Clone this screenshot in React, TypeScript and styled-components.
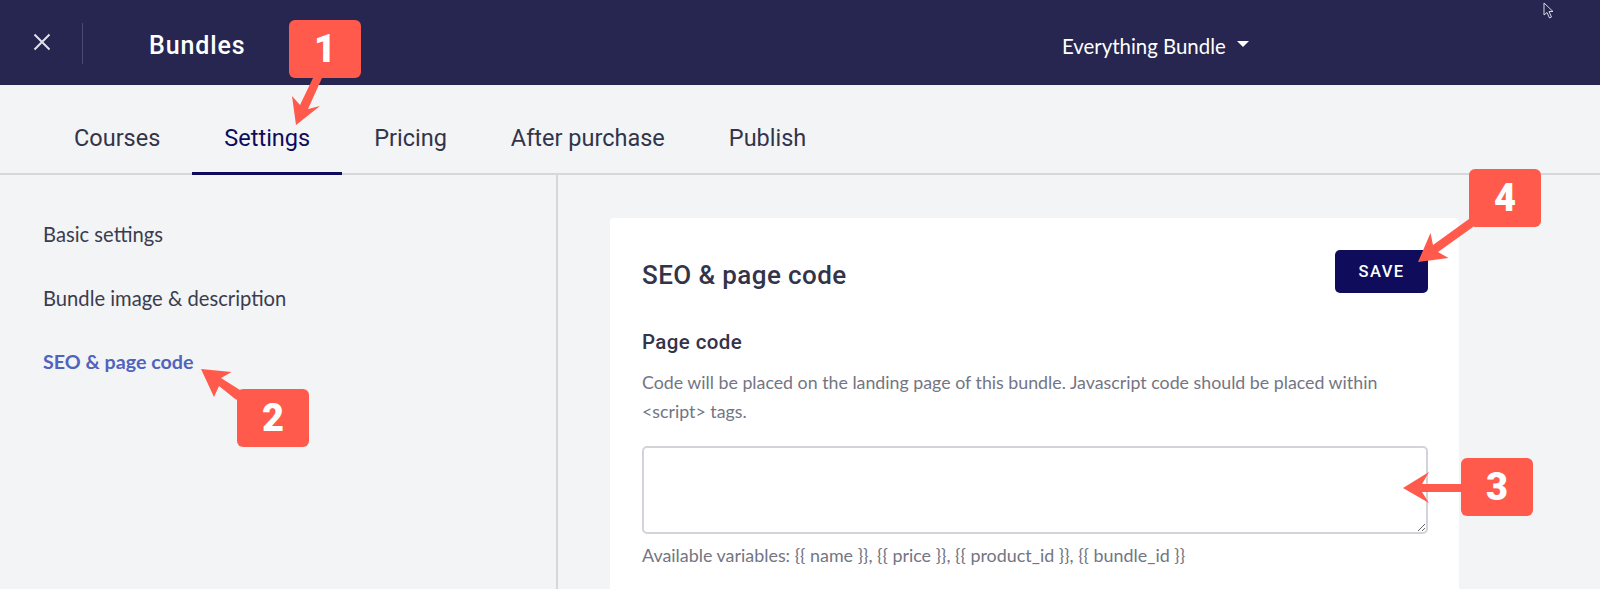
import React from "react";
import styled, { createGlobalStyle } from "styled-components";

const Global = createGlobalStyle`
  html, body { margin: 0; padding: 0; background: #f2f4f6; }
  * { box-sizing: border-box; }
`;

const Page = styled.div`
  position: relative;
  width: 1600px;
  height: 589px;
  overflow: hidden;
  background: #f2f4f6;
  font-family: "Lato", "Liberation Sans", sans-serif;
`;

const Header = styled.header`
  display: flex;
  align-items: center;
  height: 85px;
  background: #262650;
  color: #fff;
`;

const CloseButton = styled.div`
  display: flex;
  align-items: center;
  justify-content: center;
  width: 83px;
  height: 41px;
  margin-top: 2px;
  padding: 0 0 4px 2px;
  border-right: 1px solid #4a4b70;
`;

const HeaderTitle = styled.h1`
  margin: 6px 0 0 66px;
  font: 500 25px "Roboto", sans-serif;
  letter-spacing: 0.9px;
  width: 913px;
`;

const BundleSelect = styled.div`
  display: flex;
  align-items: center;
  gap: 11px;
  font-size: 20.4px;
  margin-top: 6px;
`;

const Caret = styled.span`
  width: 0;
  height: 0;
  margin-top: -4px;
  border-left: 6px solid transparent;
  border-right: 6px solid transparent;
  border-top: 6px solid #fff;
`;

const Tabs = styled.nav`
  display: flex;
  height: 90px;
  padding-left: 42px;
  border-bottom: 2px solid #d5d7dc;
`;

const Tab = styled.div<{ $active?: boolean }>`
  display: flex;
  align-items: center;
  justify-content: center;
  height: 90px;
  padding: 18px 32px 0;
  font: 400 23.5px "Roboto", sans-serif;
  color: ${p => (p.$active ? "#0f0c5c" : "#33344a")};
  border-bottom: 3px solid ${p => (p.$active ? "#0f0c5c" : "transparent")};
`;

const Body = styled.div`
  display: flex;
  height: 414px;
`;

const Sidebar = styled.aside`
  width: 558px;
  flex: none;
  border-right: 2px solid #d5d7dc;
  padding: 47px 0 0 43px;
  display: flex;
  flex-direction: column;
  gap: 40px;
`;

const SideLink = styled.div<{ $active?: boolean }>`
  font-size: ${p => (p.$active ? "19.7px" : "20.2px")};
  line-height: 24px;
  color: ${p => (p.$active ? "#5063bd" : "#3b3c4e")};
  font-weight: ${p => (p.$active ? 700 : 400)};
`;

const Main = styled.main`
  flex: 1;
  padding: 43px 141px 0 52px;
`;

const Card = styled.section`
  background: #fff;
  border-radius: 4px 4px 0 0;
  height: 400px;
  padding: 32px 31px 0 32px;
`;

const CardHead = styled.div`
  display: flex;
  align-items: center;
  justify-content: space-between;
`;

const CardTitle = styled.h2`
  margin: 6px 0 0;
  font: 500 26px "Roboto", sans-serif;
  letter-spacing: 0.4px;
  color: #33344a;
`;

const SaveButton = styled.button`
  width: 93px;
  height: 43px;
  border: 0;
  border-radius: 5px;
  background: #0f0c5c;
  color: #fff;
  font: 500 16.5px "Roboto", sans-serif;
  letter-spacing: 1.4px;
`;

const Label = styled.h3`
  margin: 36px 0 0;
  font: 500 20.5px/26px "Roboto", sans-serif;
  letter-spacing: 0.4px;
  color: #33344a;
`;

const Help = styled.p`
  margin: 13px 0 0;
  font-size: 17.8px;
  line-height: 29px;
  color: #737583;
`;

const CodeBox = styled.textarea`
  display: block;
  width: 100%;
  height: 88px;
  margin-top: 20px;
  border: 2px solid #d3d4d9;
  border-radius: 5px;
  background: #fff;
  outline: none;
`;

const Hint = styled.div`
  margin-top: 8px;
  font-size: 17.9px;
  line-height: 26px;
  color: #737583;
`;

const Badge = styled.div<{ $x: number; $y: number }>`
  position: absolute;
  left: ${p => p.$x}px;
  top: ${p => p.$y}px;
  width: 72px;
  height: 58px;
  display: flex;
  align-items: center;
  justify-content: center;
  border-radius: 6px;
  background: #ff5a4b;
  color: #fff;
  font: 900 38px "Roboto", "Liberation Sans", sans-serif;
`;

const Overlay = styled.svg`
  position: absolute;
  inset: 0;
  pointer-events: none;
`;

const arrows = [
  "M313,78 L322,78 L308,109 L320,106 L296,125 L292,96 L300,105 Z",
  "M201,369 L231.5,372 L221,378 L240,390 L236.5,400 L219,386 L214,397 Z",
  "M1403,488 L1429,472 L1422,484 L1462,484 L1462,492 L1422,492 L1429,503 Z",
  "M1418,262 L1430.5,233 L1433,245 L1469,219 L1473,227 L1438,252 L1448.5,258 Z",
];

export default function App() {
  return (
    <Page>
      <Global />
      <Header>
        <CloseButton>
          <svg width="20" height="20" viewBox="0 0 20 20" fill="none" stroke="#e2e2ea" strokeWidth="2">
            <path d="M2.5 2.5 L17.5 17.5 M17.5 2.5 L2.5 17.5" />
          </svg>
        </CloseButton>
        <HeaderTitle>Bundles</HeaderTitle>
        <BundleSelect>
          Everything Bundle
          <Caret />
        </BundleSelect>
      </Header>
      <Tabs>
        <Tab>Courses</Tab>
        <Tab $active>Settings</Tab>
        <Tab>Pricing</Tab>
        <Tab>After purchase</Tab>
        <Tab>Publish</Tab>
      </Tabs>
      <Body>
        <Sidebar>
          <SideLink>Basic settings</SideLink>
          <SideLink>Bundle image &amp; description</SideLink>
          <SideLink $active>SEO &amp; page code</SideLink>
        </Sidebar>
        <Main>
          <Card>
            <CardHead>
              <CardTitle>SEO &amp; page code</CardTitle>
              <SaveButton>SAVE</SaveButton>
            </CardHead>
            <Label>Page code</Label>
            <Help>
              Code will be placed on the landing page of this bundle. Javascript code should be placed within
              <br />
              &lt;script&gt; tags.
            </Help>
            <CodeBox />
            <Hint>{"Available variables: {{ name }}, {{ price }}, {{ product_id }}, {{ bundle_id }}"}</Hint>
          </Card>
        </Main>
      </Body>
      <Overlay width="1600" height="589" viewBox="0 0 1600 589">
        {arrows.map(d => (
          <path key={d} d={d} fill="#ff5a4b" />
        ))}
        <path d="M1544 3 L1544 15 L1547 12.5 L1549.5 18 L1551.5 17 L1549 11.5 L1553 11.5 Z" fill="#25264f" stroke="#d8d8e0" strokeWidth="1" />
      </Overlay>
      <Badge $x={289} $y={20}>1</Badge>
      <Badge $x={237} $y={389}>2</Badge>
      <Badge $x={1461} $y={458}>3</Badge>
      <Badge $x={1469} $y={169}>4</Badge>
    </Page>
  );
}
